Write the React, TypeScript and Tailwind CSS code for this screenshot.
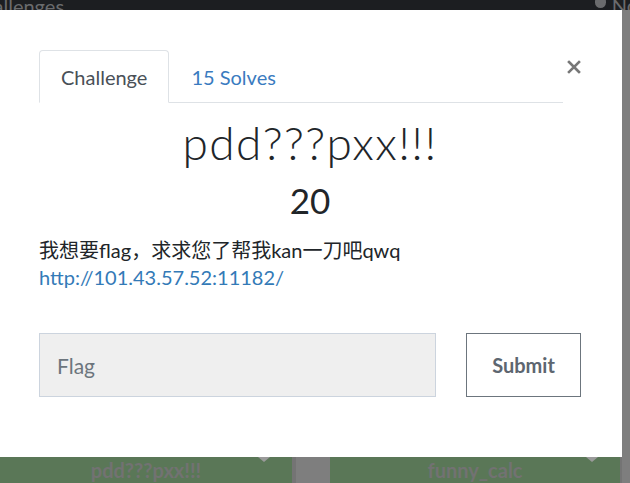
import React, { useState } from 'react';

const lato = { fontFamily: 'Lato, "Noto Sans CJK SC", sans-serif' };

const Backdrop: React.FC = () => {
    return (
        <div className="flex flex-col w-full h-full bg-[#7e7e7e]">
            <div className="flex h-[10px] overflow-hidden bg-[#1c1e21] text-[#6a6b6d] text-[20px] leading-none">
                <span className="-mt-[4px] -ml-[31px]">Challenges</span>
                <span className="ml-auto flex items-start gap-[6px] mr-[-8px] -mt-[5px]">
                    <span className="mt-[1px] w-[11px] h-[12px] rounded-full bg-[#6a6b6d]" />
                    <span>No</span>
                </span>
            </div>
            <div className="flex-1" />
            <div className="flex h-[26px] font-bold text-[20px] text-[#727272]">
                <div className="relative w-[292px] bg-[#5a7757] flex justify-center pt-[3px] leading-none">
                    pdd???pxx!!!
                    <span className="absolute right-[22px] top-0 border-x-[6px] border-x-transparent border-t-[5px] border-t-[#9a9a9a]" />
                </div>
                <div className="w-[38px] border-l-[4px] border-[#747474]" />
                <div className="relative w-[290px] bg-[#5a7757] flex justify-center pt-[3px] leading-none">
                    funny_calc
                    <span className="absolute right-[22px] top-0 border-x-[6px] border-x-transparent border-t-[5px] border-t-[#9a9a9a]" />
                </div>
                <div className="flex-1 border-l-[2px] border-[#747474]" />
            </div>
        </div>
    );
};

const ChallengeModal: React.FC = () => {
    const [tab, setTab] = useState<'challenge' | 'solves'>('challenge');
    const [flag, setFlag] = useState('');

    const tabClass = (active: boolean) => active
        ? 'h-[53px] px-[21px] -mb-px bg-white border border-b-white border-[#dee2e6] rounded-t-[4px] text-[#495057]'
        : 'h-[53px] px-[21px] -mb-px border border-transparent text-[#3a7bc0]';

    return (
        <div className="absolute left-0 top-[10px] w-[622px] h-[447px] bg-white pl-[39px] pr-[41px] pt-[40px]" style={lato}>
            <div className="flex">
                <div className="flex flex-1 border-b border-[#dee2e6] mr-[3px] text-[20px]">
                    <button onClick={() => setTab('challenge')} className={tabClass(tab === 'challenge')}>
                        Challenge
                    </button>
                    <button onClick={() => setTab('solves')} className={tabClass(tab === 'solves')}>
                        15 Solves
                    </button>
                </div>
                <button className="mt-[10px] ml-[1px] w-[14px] h-[14px] self-start text-[#777]" aria-label="Close">
                    <svg width="14" height="14" viewBox="0 0 14 14">
                        <path d="M2 2 L12 12 M12 2 L2 12" stroke="currentColor" strokeWidth="2.6" strokeLinecap="square" />
                    </svg>
                </button>
            </div>

            <h2 className="mt-[17px] text-center text-[46px] font-light leading-none tracking-[1.4px] text-[#212529]">
                pdd???pxx!!!
            </h2>
            <h3 className="mt-[17px] text-center text-[35px] leading-none text-[#212529]">20</h3>
            <p className="mt-[17px] text-[20px] leading-[30px] text-[#212529]">我想要flag，求求您了帮我kan一刀吧qwq</p>
            <a href="#" className="block -mt-[2px] text-[20px] leading-[28px] text-[#337ab7]">http://101.43.57.52:11182/</a>

            <div className="flex mt-[42px] gap-[30px]">
                <input
                    value={flag}
                    onChange={(e) => setFlag(e.target.value)}
                    placeholder="Flag"
                    className="flex-1 min-w-0 h-[64px] px-[17px] bg-[#efefef] border border-[#ccd4de] text-[21px] text-[#495057] placeholder:text-[#6c757d] outline-none"
                />
                <button className="w-[115px] h-[64px] border border-[#6c757d] text-[20px] font-bold text-[#5d6670]">
                    Submit
                </button>
            </div>
        </div>
    );
};

const App: React.FC = () => {
    return (
        <div className="relative w-[630px] h-[483px] overflow-hidden" style={lato}>
            <Backdrop/>
            <ChallengeModal/>
        </div>
    );
};

export default App;
